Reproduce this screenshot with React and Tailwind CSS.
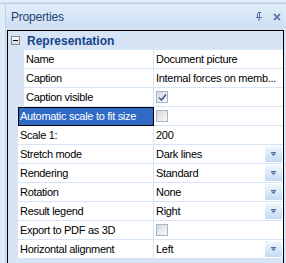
import React from 'react';

const gutter = 'bg-[#d6e4f5]';

function DropBtn() {
  return (
    <div className="w-[17px] h-[16px] mr-[1px] shrink-0 flex items-center justify-center bg-gradient-to-b from-[#f1f7fe] to-[#c4daf4]">
      <svg width="5" height="4" viewBox="0 0 5 4">
        <rect x="0" y="0" width="5" height="1" fill="#4d6d9e" />
        <path d="M0 1.5h5L2.5 4z" fill="#4d6d9e" />
      </svg>
    </div>
  );
}

function Check({ checked }) {
  return (
    <div className="w-[12px] h-[12px] border border-[#a3b6d0] bg-gradient-to-br from-[#d8d8d8] to-[#fafafa] flex items-center justify-center">
      {checked && (
        <svg width="9" height="9" viewBox="0 0 9 9">
          <path d="M1 4.5l2.5 2.5L8 1.5" stroke="#3c5f9a" strokeWidth="1.6" fill="none" />
        </svg>
      )}
    </div>
  );
}

const rows = [
  { name: 'Name', value: 'Document picture', indent: true },
  { name: 'Caption', value: 'Internal forces on memb...', indent: true },
  { name: 'Caption visible', check: true, checked: true, indent: true },
  { name: 'Automatic scale to fit size', check: true, selected: true },
  { name: 'Scale 1:', value: '200' },
  { name: 'Stretch mode', value: 'Dark lines', drop: true },
  { name: 'Rendering', value: 'Standard', drop: true },
  { name: 'Rotation', value: 'None', drop: true },
  { name: 'Result legend', value: 'Right', drop: true },
  { name: 'Export to PDF as 3D', check: true },
  { name: 'Horizontal alignment', value: 'Left', drop: true },
];

function Row({ r }) {
  return (
    <div className="flex h-[19px] shrink-0">
      <div className={`${r.indent ? 'w-[16px]' : 'w-[10px]'} ${gutter} shrink-0`} />
      <div
        className={
          r.selected
            ? `${r.indent ? 'w-[130px]' : 'w-[136px]'} shrink-0 border border-black bg-[#316ac5] text-white pl-[1px] flex items-center whitespace-nowrap overflow-hidden`
            : `${r.indent ? 'w-[130px]' : 'w-[136px]'} shrink-0 border-r border-b border-[#d6e4f5] bg-white pl-[2px] flex items-center whitespace-nowrap overflow-hidden`
        }
      >
        {r.name}
      </div>
      <div className="flex-1 min-w-0 border-b border-[#d6e4f5] bg-white flex items-center pl-[2px]">
        {r.check ? (
          <Check checked={r.checked} />
        ) : (
          <span className="flex-1 whitespace-nowrap overflow-hidden">{r.value}</span>
        )}
        {r.drop && <DropBtn />}
      </div>
    </div>
  );
}

export default function App() {
  return (
    <div className="w-[286px] h-[263px] overflow-hidden flex flex-col bg-[#d6e4f5] text-[11px] tracking-[-0.3px] text-black font-['Liberation_Sans',Arial,sans-serif]">
      <div className="h-[4px] bg-gradient-to-b from-[#e9f1fb] to-[#cfe0f4] border-b border-[#b4cbe8]" />
      <div className="flex flex-1 min-h-0">
        <div className="w-[5px] bg-[#e1ecf9]" />
        <div className="flex-1 flex flex-col border-l border-[#bcd1eb]">
          <div className="h-[25px] shrink-0 flex items-center pl-[5px] pr-[5px] bg-gradient-to-b from-[#e2edf9] to-[#cddff3]">
            <span className="flex-1 text-[#1e3f74] text-[12px] tracking-[-0.2px]">Properties</span>
            <svg width="8" height="9" viewBox="0 0 8 9" className="mr-[10px]">
              <path d="M2 0h4v1H5v4h2v1H1V5h1V1h1V0z" fill="#4e6fa3" />
              <rect x="3" y="1" width="1" height="4" fill="#e2edf9" />
              <rect x="3.5" y="6" width="1" height="3" fill="#4e6fa3" />
            </svg>
            <svg width="8" height="8" viewBox="0 0 8 8">
              <path d="M1 1l6 6M7 1L1 7" stroke="#4e6fa3" strokeWidth="1.7" />
            </svg>
          </div>
          <div className="h-[1px] shrink-0" />
          <div className="flex-1 ml-[1px] mr-[2px] border-l border-t border-r border-black flex flex-col bg-[#d6e4f5]">
            <div className="h-[19px] shrink-0 flex items-center pl-[3px]">
              <div className="w-[9px] h-[9px] border border-[#7f8a99] bg-gradient-to-b from-white to-[#d5d9df] flex items-center justify-center">
                <div className="w-[5px] h-[1px] bg-black" />
              </div>
              <span className="ml-[7px] font-bold text-[12px] tracking-normal text-[#15428b]">Representation</span>
            </div>
            {rows.map((r) => (
              <Row key={r.name} r={r} />
            ))}
          </div>
        </div>
      </div>
    </div>
  );
}
